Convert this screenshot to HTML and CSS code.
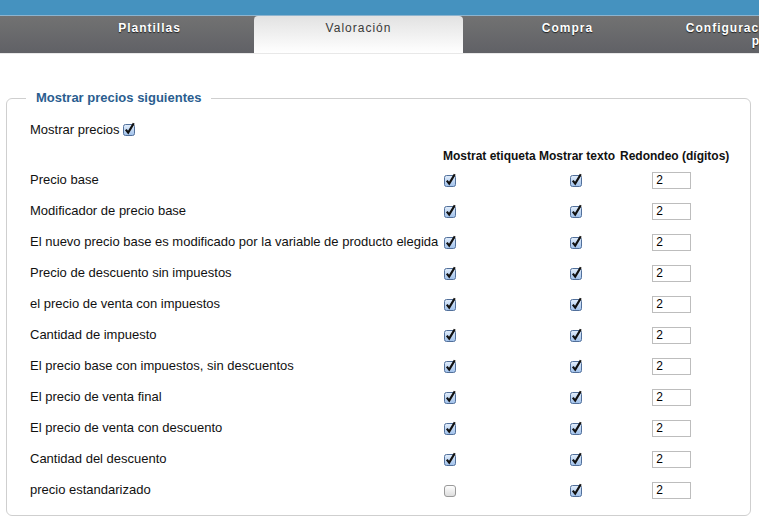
FILE: index.html
```html
<!DOCTYPE html>
<html>
<head>
    <title>Valoración</title>
    <meta name="viewport" content="width=device-width, initial-scale=1.0">
    <link rel="stylesheet" href="styles.css">
</head>
<body>
    <svg class="svg-defs" aria-hidden="true">
        <defs>
            <linearGradient id="boxOn" x1="0" y1="0" x2="0" y2="1">
                <stop offset="0" stop-color="#e3eefb"/>
                <stop offset="1" stop-color="#9fc0ea"/>
            </linearGradient>
            <linearGradient id="boxOff" x1="0" y1="0" x2="0" y2="1">
                <stop offset="0" stop-color="#ffffff"/>
                <stop offset="1" stop-color="#dcdcdc"/>
            </linearGradient>
            <symbol id="checkOn" viewBox="0 0 14 14">
                <rect x="1.5" y="2.5" width="11" height="11" rx="2" fill="url(#boxOn)" stroke="#52709b"/>
                <path d="M3.8 7.6 L6.2 10.6 L11.8 1.2" fill="none" stroke="#111" stroke-width="2.2"/>
            </symbol>
            <symbol id="checkOff" viewBox="0 0 14 14">
                <rect x="1.5" y="2.5" width="11" height="11" rx="2.5" fill="url(#boxOff)" stroke="#9a9a9a"/>
            </symbol>
        </defs>
    </svg>

    <div class="topbar"></div>
    <div class="tabs">
        <a class="tab">Plantillas</a>
        <a class="tab active">Valoración</a>
        <a class="tab">Compra</a>
        <a class="tab">Configuración de todos los precios</a>
    </div>

    <div class="content">
        <fieldset class="prices">
            <legend>Mostrar precios siguientes</legend>
            <div class="show-prices">
                Mostrar precios
                <svg class="check"><use href="#checkOn"/></svg>
            </div>
            <table class="price-table">
                <colgroup>
                    <col class="col-name">
                    <col class="col-label">
                    <col class="col-text">
                    <col class="col-round">
                </colgroup>
                <thead>
                    <tr>
                        <th></th>
                        <th>Mostrat etiqueta</th>
                        <th>Mostrar texto</th>
                        <th>Redondeo (dígitos)</th>
                    </tr>
                </thead>
                <tbody>
                    <tr>
                        <td>Precio base</td>
                        <td><svg class="check"><use href="#checkOn"/></svg></td>
                        <td class="mid"><svg class="check"><use href="#checkOn"/></svg></td>
                        <td class="mid"><input type="text" value="2"></td>
                    </tr>
                    <tr>
                        <td>Modificador de precio base</td>
                        <td><svg class="check"><use href="#checkOn"/></svg></td>
                        <td class="mid"><svg class="check"><use href="#checkOn"/></svg></td>
                        <td class="mid"><input type="text" value="2"></td>
                    </tr>
                    <tr>
                        <td>El nuevo precio base es modificado por la variable de producto elegida</td>
                        <td><svg class="check"><use href="#checkOn"/></svg></td>
                        <td class="mid"><svg class="check"><use href="#checkOn"/></svg></td>
                        <td class="mid"><input type="text" value="2"></td>
                    </tr>
                    <tr>
                        <td>Precio de descuento sin impuestos</td>
                        <td><svg class="check"><use href="#checkOn"/></svg></td>
                        <td class="mid"><svg class="check"><use href="#checkOn"/></svg></td>
                        <td class="mid"><input type="text" value="2"></td>
                    </tr>
                    <tr>
                        <td>el precio de venta con impuestos</td>
                        <td><svg class="check"><use href="#checkOn"/></svg></td>
                        <td class="mid"><svg class="check"><use href="#checkOn"/></svg></td>
                        <td class="mid"><input type="text" value="2"></td>
                    </tr>
                    <tr>
                        <td>Cantidad de impuesto</td>
                        <td><svg class="check"><use href="#checkOn"/></svg></td>
                        <td class="mid"><svg class="check"><use href="#checkOn"/></svg></td>
                        <td class="mid"><input type="text" value="2"></td>
                    </tr>
                    <tr>
                        <td>El precio base con impuestos, sin descuentos</td>
                        <td><svg class="check"><use href="#checkOn"/></svg></td>
                        <td class="mid"><svg class="check"><use href="#checkOn"/></svg></td>
                        <td class="mid"><input type="text" value="2"></td>
                    </tr>
                    <tr>
                        <td>El precio de venta final</td>
                        <td><svg class="check"><use href="#checkOn"/></svg></td>
                        <td class="mid"><svg class="check"><use href="#checkOn"/></svg></td>
                        <td class="mid"><input type="text" value="2"></td>
                    </tr>
                    <tr>
                        <td>El precio de venta con descuento</td>
                        <td><svg class="check"><use href="#checkOn"/></svg></td>
                        <td class="mid"><svg class="check"><use href="#checkOn"/></svg></td>
                        <td class="mid"><input type="text" value="2"></td>
                    </tr>
                    <tr>
                        <td>Cantidad del descuento</td>
                        <td><svg class="check"><use href="#checkOn"/></svg></td>
                        <td class="mid"><svg class="check"><use href="#checkOn"/></svg></td>
                        <td class="mid"><input type="text" value="2"></td>
                    </tr>
                    <tr>
                        <td>precio estandarizado</td>
                        <td><svg class="check"><use href="#checkOff"/></svg></td>
                        <td class="mid"><svg class="check"><use href="#checkOn"/></svg></td>
                        <td class="mid"><input type="text" value="2"></td>
                    </tr>
                </tbody>
            </table>
        </fieldset>
    </div>
</body>
</html>
```

FILE: styles.css
```css
body {
    font-family: "Liberation Sans", Arial, sans-serif;
    font-size: 13px;
    color: #111;
    margin: 0;
    background: #fff;
    overflow: hidden;
}

.svg-defs {
    display: block;
    width: 0;
    height: 0;
    overflow: hidden;
}

/* top navigation */
.topbar {
    height: 15px;
    background: #4592bf;
    border-bottom: 1px solid #8db4cf;
}

.tabs {
    display: flex;
    height: 37px;
    padding-left: 45px;
    background: linear-gradient(#727272, #606166);
    border-bottom: 1px solid #e8e8e8;
    overflow: hidden;
}

.tab {
    flex: 0 0 209px;
    box-sizing: border-box;
    padding: 6px 12px 0 12px;
    text-align: center;
    font-size: 12px;
    line-height: 13px;
    font-weight: bold;
    letter-spacing: 1px;
    color: #fff;
    text-shadow: 0 1px 1px #222;
}

.tab.active {
    background: linear-gradient(#e2e2e2, #ffffff);
    border-radius: 4px 4px 0 0;
    color: #3a3a3a;
    font-weight: normal;
    text-shadow: none;
}

/* content */
.content {
    padding: 37px 8px 0 6px;
}

.prices {
    margin: 0;
    border: 1px solid #cfcfcf;
    border-radius: 6px;
    padding: 16px 10px 10px 23px;
}

.prices legend {
    margin-left: -4px;
    padding: 0 10px;
    font-weight: bold;
    line-height: 14px;
    color: #2a5d8f;
}

.show-prices {
    display: flex;
    align-items: center;
    gap: 2px;
    height: 16px;
    margin-bottom: 10px;
}

.check {
    display: block;
    width: 14px;
    height: 14px;
}

.price-table {
    border-collapse: collapse;
    table-layout: fixed;
}

.col-name { width: 413px; }
.col-label { width: 96px; }
.col-text { width: 81px; }
.col-round { width: 111px; }

.price-table th {
    height: 17px;
    padding: 0 2px 0 0;
    text-align: left;
    font-size: 12px;
    white-space: nowrap;
}

.price-table td {
    height: 31px;
    padding: 0;
    white-space: nowrap;
}

.price-table td.mid {
    text-align: center;
    padding-right: 8px;
}

.price-table td.mid .check {
    margin: 0 auto;
}

.price-table input[type="text"] {
    box-sizing: border-box;
    width: 39px;
    height: 17px;
    margin: 1px 0 0 0;
    padding: 0 3px;
    border: 1px solid #bdbdbd;
    font-family: "Liberation Sans", Arial, sans-serif;
    font-size: 12px;
    color: #000;
    vertical-align: middle;
}
```
